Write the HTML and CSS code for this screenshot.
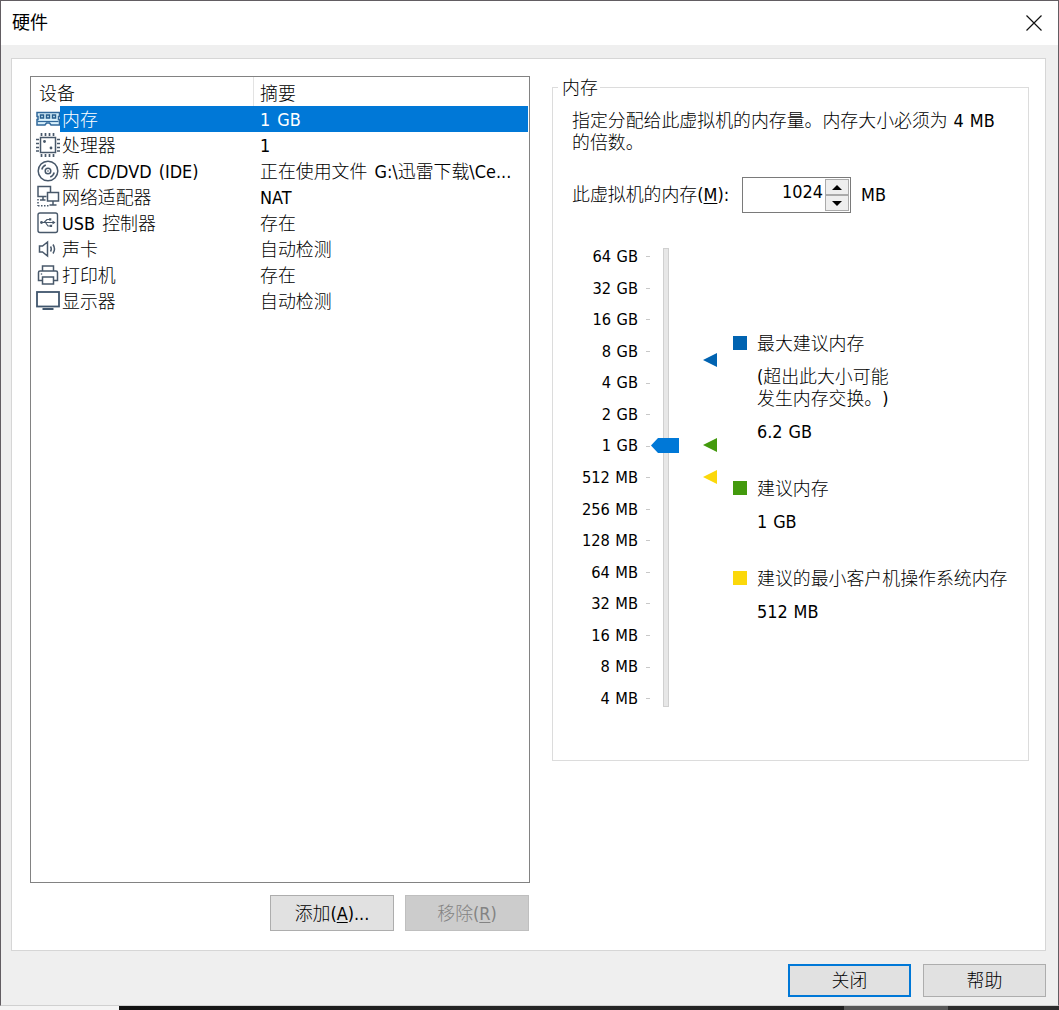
FILE: index.html
```html
<!DOCTYPE html>
<html lang="zh-CN">
<head>
<meta charset="utf-8">
<title>硬件</title>
<link rel="stylesheet" href="styles.css">
</head>
<body>
<div class="window">
  <header class="titlebar">
    <h1>硬件</h1>
    <svg class="close" width="16" height="16" viewBox="0 0 16 16"><path d="M.5.5l15 15M15.5.5l-15 15" fill="none" stroke="#111" stroke-width="1.2"/></svg>
  </header>
  <main class="panel">
    <section class="left">
      <div class="devices">
        <div class="row head"><span class="name">设备</span><span class="summary">摘要</span></div>
        <div class="row selected">
          <svg class="icon" width="24" height="26" viewBox="0 0 24 26"><path d="M1 6.500h22.500v4h-1v3h1v5.500H15l-1.500-2h-3l-1.500 2H1v-5.500h1v-3H1z" fill="#d9f0fb" stroke="#31689a" stroke-width="1.500"/><path d="M1.500 15.500h21" stroke="#31689a" stroke-width="1.200"/><path d="M4.500 9h3v3h-3zM10.500 9h3v3h-3zM16.500 9h3v3h-3z" fill="none" stroke="#245b8b" stroke-width="1.500"/></svg>
          <span class="name">内存</span><span class="summary">1 GB</span></div>
        <div class="row">
          <svg class="icon" width="24" height="26" viewBox="0 0 24 26"><g fill="none" stroke="#48586a"><rect x="4.500" y="5.500" width="15" height="15" stroke-width="1.500"/><path d="M5.500 1v3M9.500 1v3M13.500 1v3M17.500 1v3M5.500 22v3M9.500 22v3M13.500 22v3M17.500 22v3M0 7.500h3M0 11.500h3M0 15.500h3M0 19h3M21 7.500h3M21 11.500h3M21 15.500h3M21 19h3" stroke-width="1.700"/></g><circle cx="8.500" cy="9.500" r="1.400" fill="#48586a"/><circle cx="15" cy="16" r="1.400" fill="#48586a"/></svg>
          <span class="name">处理器</span><span class="summary">1</span></div>
        <div class="row">
          <svg class="icon" width="24" height="26" viewBox="0 0 24 26"><g fill="none" stroke="#48586a" stroke-width="1.500"><circle cx="12" cy="13" r="9.800"/><circle cx="12" cy="13" r="2.800"/><path d="M5.800 11.500a6.500 6.500 0 0 1 4-4.500M18.200 14.500a6.500 6.500 0 0 1-4 4.500"/></g><circle cx="12" cy="13" r=".8" fill="#48586a"/></svg>
          <span class="name">新 CD/DVD (IDE)</span><span class="summary">正在使用文件 G:\迅雷下载\Ce...</span></div>
        <div class="row">
          <svg class="icon" width="24" height="26" viewBox="0 0 24 26"><g fill="none" stroke="#48586a" stroke-width="1.500"><path d="M10.500 12.500H2v-10h12.500V8M7 12.500V16M4 16h5.500"/><rect x="11.500" y="8.500" width="11" height="8.500"/><path d="M17 17v4M13.500 21h7"/><path d="M2 15v7M2 21.700h12" stroke-dasharray="1.500 1.500"/></g></svg>
          <span class="name">网络适配器</span><span class="summary">NAT</span></div>
        <div class="row">
          <svg class="icon" width="24" height="26" viewBox="0 0 24 26"><g fill="none" stroke="#48586a" stroke-width="1.400"><rect x="2" y="3" width="19.500" height="19.500" rx="2"/><path d="M5 12.500h13M8 12.500l3-3h2.500M9.500 12.500l2.500 3.500h2.500" stroke-width="1.200"/></g><path d="M16.500 10.500l3 2-3 2zM13 8.300h2.300v2.300H13zM13.800 14.800h2.300v2.300h-2.300z" fill="#48586a"/><circle cx="5.500" cy="12.500" r="1.400" fill="#48586a"/></svg>
          <span class="name">USB 控制器</span><span class="summary">存在</span></div>
        <div class="row">
          <svg class="icon" width="24" height="26" viewBox="0 0 24 26"><g fill="none" stroke="#48586a" stroke-width="1.500"><path d="M3.500 10h3l5-4v14l-5-4h-3zM14.500 10.500q1.500 2.500 0 5M17 8.500q3 4.500 0 9"/></g></svg>
          <span class="name">声卡</span><span class="summary">自动检测</span></div>
        <div class="row">
          <svg class="icon" width="24" height="26" viewBox="0 0 24 26"><g fill="none" stroke="#48586a" stroke-width="1.500"><path d="M6.500 9V4h11v5M6.500 18.500h-4v-8q0-1.500 1.500-1.500h16q1.500 0 1.500 1.500v8h-4"/><rect x="6.500" y="15" width="11" height="7"/></g><circle cx="5.500" cy="12" r=".8" fill="#48586a"/></svg>
          <span class="name">打印机</span><span class="summary">存在</span></div>
        <div class="row">
          <svg class="icon" width="24" height="26" viewBox="0 0 24 26"><rect x="1" y="4" width="22" height="14.500" fill="none" stroke="#40566d" stroke-width="1.800"/><path d="M6.500 21h11" stroke="#40566d" stroke-width="2"/></svg>
          <span class="name">显示器</span><span class="summary">自动检测</span></div>
      </div>
      <div class="actions">
        <button class="btn">添加(<u>A</u>)...</button>
        <button class="btn disabled" disabled>移除(<u>R</u>)</button>
      </div>
    </section>
    <section class="memory">
      <h2>内存</h2>
      <p class="intro">指定分配给此虚拟机的内存量。内存大小必须为 4 MB<br>的倍数。</p>
      <div class="amount">
        <label>此虚拟机的内存(<u>M</u>):</label>
        <div class="spin"><span class="value">1024</span><div class="steps">
          <i><svg width="10" height="5" viewBox="0 0 10 5"><path d="M0 5l5-5 5 5z"/></svg></i>
          <i><svg width="10" height="5" viewBox="0 0 10 5"><path d="M0 0h10L5 5z"/></svg></i>
        </div></div>
        <span class="unit">MB</span>
      </div>
      <div class="scale">
        <ul class="labels">
          <li>64 GB</li><li>32 GB</li><li>16 GB</li><li>8 GB</li><li>4 GB</li><li>2 GB</li><li>1 GB</li><li>512 MB</li><li>256 MB</li><li>128 MB</li><li>64 MB</li><li>32 MB</li><li>16 MB</li><li>8 MB</li><li>4 MB</li>
        </ul>
        <div class="track">
          <svg class="thumb" width="28" height="15" viewBox="0 0 28 15"><path d="M0 7.500L7 0h21v15H7z" fill="#0078d7"/></svg>
          <svg class="mark max" width="14" height="14" viewBox="0 0 14 14"><path d="M0 7l14-7v14z" fill="#0063b1"/></svg>
          <svg class="mark rec" width="14" height="14" viewBox="0 0 14 14"><path d="M0 7l14-7v14z" fill="#439a0d"/></svg>
          <svg class="mark min" width="14" height="14" viewBox="0 0 14 14"><path d="M0 7l14-7v14z" fill="#fbd80b"/></svg>
        </div>
        <div class="legend">
          <div class="entry blue"><h3>最大建议内存</h3><p>(超出此大小可能<br>发生内存交换。)</p><p>6.2 GB</p></div>
          <div class="entry green"><h3>建议内存</h3><p>1 GB</p></div>
          <div class="entry yellow"><h3>建议的最小客户机操作系统内存</h3><p>512 MB</p></div>
        </div>
      </div>
    </section>
  </main>
  <footer class="footer">
    <button class="btn primary">关闭</button>
    <button class="btn">帮助</button>
  </footer>
</div>
<div class="desktop"></div>
</body>
</html>
```
FILE: styles.css
```css
* { box-sizing: border-box; margin: 0; padding: 0; }
body {
  width: 1059px; height: 1010px; overflow: hidden;
  font: 300 17.9px/22px "DejaVu Sans Condensed", "Noto Sans CJK SC", sans-serif;
  text-spacing-trim: space-all;
  word-spacing: .8px;
  color: #000; background: #efefef; white-space: nowrap;
}
h1, h2, h3 { font-size: inherit; font-weight: inherit; }
u { text-decoration-thickness: 1px; text-underline-offset: 2px; }
.window {
  height: 1006px; display: flex; flex-direction: column;
  background: #efefef; border: 1px solid #625d62; border-bottom-color: #d0d0d0;
}
.titlebar {
  height: 44px; flex: none; padding: 0 16px 0 11px; background: #fff;
  display: flex; align-items: center; justify-content: space-between;
}
.titlebar h1 { font-size: 18px; font-weight: 400; }
.panel {
  width: 1035px; height: 893px; margin: 13px 0 0 10px; padding: 17px 16px 0 18px;
  background: #fff; border: 1px solid #d6d6d6; flex: none;
  display: flex; justify-content: space-between;
}
.left { width: 500px; }
.devices { height: 807px; border: 1px solid #828282; padding-right: 1px; }
.row { height: 26px; display: flex; line-height: 28px; word-spacing: 2px; }
.row.head { height: 29px; line-height: 33px; }
.head .name { width: 223px; padding-left: 8px; border-right: 1px solid #e3e3e3; }
.head .summary { padding-left: 6px; }
.icon { margin-left: 5px; flex: none; }
.name { width: 193px; padding-left: 2px; flex: none; }
.summary { flex: 1; padding-left: 7px; }
.selected .name, .selected .summary { background: #0078d7; color: #fff; }
.actions { display: flex; justify-content: flex-end; gap: 11px; padding: 12px 1px 0 0; }
.btn {
  width: 124px; height: 36px; font: inherit; color: #000;
  background: #e1e1e1; border: 1px solid #adadad;
}
.actions .btn { padding-top: 2px; }
.btn.disabled { background: #ccc; border-color: #bfbfbf; color: #838383; }
.memory {
  width: 477px; height: 674px; margin-top: 11px; padding: 0 0 0 20px;
  border: 1px solid #dcdcdc;
}
.memory h2 { width: 42px; height: 22px; margin: -11px 0 0 -15px; padding-left: 4px; background: #fff; }
.intro { margin: 11px 0 0 -1px; }
.amount { height: 36px; margin-top: 23px; display: flex; align-items: center; }
.amount label { width: 170px; margin-left: -1px; }
.spin { width: 109px; height: 36px; border: 1px solid #7a7a7a; display: flex; justify-content: flex-end; }
.value { padding: 3px 2px 0 0; }
.steps { width: 25px; padding: 1px 1px 1px 0; display: grid; grid-template-rows: 1fr 1fr; }
.steps i { border: 1px solid #aaa; background: #eee; display: flex; align-items: center; justify-content: center; }
.steps svg { display: block; }
.unit { margin-left: 10px; }
.scale { display: flex; margin-top: 28px; }
.labels { width: 77px; list-style: none; font-size: 16.3px; }
.labels li {
  height: 31.57px; line-height: 31.57px; display: flex; justify-content: flex-end;
  align-items: center; gap: 8px;
}
.labels li::after { content: ""; width: 4px; height: 1px; background: #c8c8c8; }
.track {
  width: 6px; height: 459px; margin: 7px 0 0 13px;
  border: 1px solid #d0d0d0; background: #e7e7e7; position: relative; flex: none;
}
.thumb { position: absolute; left: -13px; top: 189px; }
.mark { position: absolute; left: 39px; }
.max { top: 104px; }
.rec { top: 189px; }
.min { top: 221px; }
.legend { margin: 92px 0 0 64px; }
.entry h3 { display: flex; align-items: center; }
.entry h3::before { content: ""; width: 14px; height: 14px; margin: -2px 10px 0 0; }
.entry p { padding-left: 24px; margin-top: 11px; }
.blue h3::before { background: #0063b1; }
.green h3::before { background: #439a0d; }
.yellow h3::before { background: #fbd80b; }
.green { margin-top: 35px; }
.yellow { margin-top: 35px; }
.footer { display: flex; justify-content: flex-end; gap: 12px; padding: 13px 12px 0 0; }
.footer .btn { width: 123px; height: 33px; }
.btn.primary { border: 2px solid #0078d7; }
.desktop {
  height: 4px;
  background: linear-gradient(90deg, #f4f4f4 119px, #111 119px, #262626 500px, #222 844px, #585858 844px, #585858 948px, #2c2c2c 948px);
}
```
